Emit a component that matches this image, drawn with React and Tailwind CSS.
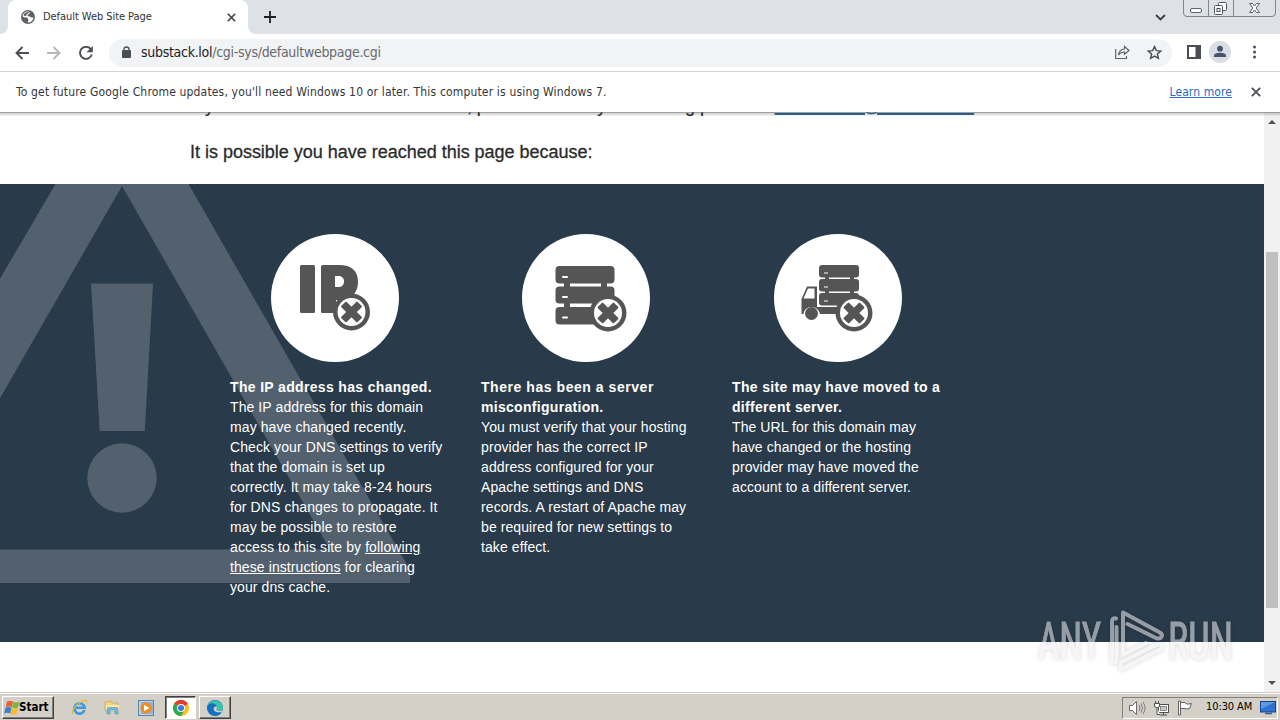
import React from "react";

const ui = "font-['DejaVu_Sans_Condensed','DejaVu_Sans',sans-serif] [font-stretch:condensed]";

function ErrorBadge({ cx, cy, scale = 1 }) {
  return (
    <g transform={`translate(${cx} ${cy}) scale(${scale})`}>
      <circle r="18.5" fill="#555" />
      <circle r="14" fill="#fff" />
      <g transform="rotate(45)" fill="#555">
        <rect x="-11.5" y="-3.8" width="23" height="7.6" rx="1" />
        <rect x="-3.8" y="-11.5" width="7.6" height="23" rx="1" />
      </g>
    </g>
  );
}

function IpIcon() {
  return (
    <svg className="block size-32" viewBox="0 0 128 128">
      <circle cx="64" cy="64" r="64" fill="#fff" />
      <rect x="29" y="31" width="15" height="48" rx="1.5" fill="#555" />
      <path fill="#555" fillRule="evenodd" d="M50 32.5Q50 31 51.5 31H68C81 31 87 37 87 48C87 59 80 66 68 66H65V79H51.5Q50 79 50 77.500ZM64 42V53H67C71 53 73 51 73 47.500C73 44 71 42 67 42Z" />
      <ErrorBadge cx="80.500" cy="78" />
    </svg>
  );
}

function ServerIcon() {
  return (
    <svg className="block size-32" viewBox="0 0 128 128">
      <circle cx="64" cy="64" r="64" fill="#fff" />
      <g fill="#555">
        <rect x="33.500" y="32" width="59" height="17.500" rx="4" />
        <rect x="33.500" y="52.500" width="59" height="17" rx="4" />
        <rect x="33.500" y="73" width="59" height="17.500" rx="4" />
        <rect x="42" y="48" width="6" height="28" />
        <rect x="79" y="48" width="6" height="28" />
      </g>
      <g fill="#fff">
        <rect x="40" y="42" width="6" height="2" rx="1" />
        <rect x="40" y="62" width="6" height="2" rx="1" />
        <rect x="40" y="82.500" width="6" height="2" rx="1" />
      </g>
      <ErrorBadge cx="86" cy="79" />
    </svg>
  );
}

function TruckIcon() {
  return (
    <svg className="block size-32" viewBox="0 0 128 128">
      <circle cx="64" cy="64" r="64" fill="#fff" />
      <g fill="#555">
        <rect x="45" y="31" width="40" height="12.500" rx="3" />
        <rect x="45" y="45" width="40" height="12.500" rx="3" />
        <rect x="45" y="59" width="40" height="12.500" rx="3" />
        <rect x="51" y="42" width="4" height="19" />
        <rect x="76" y="42" width="4" height="19" />
        <path fillRule="evenodd" d="M33 52.500H43V73H70V80H46C45 76 42 73 37.500 73C33 73 30 76 29.500 80H27.500V65ZM34 54.500L29.500 64.500H40.500V54.500Z" />
        <circle cx="37.500" cy="79.500" r="6.500" />
      </g>
      <path stroke="#fff" strokeWidth="1.200" d="M50 39H54M50 53H54M50 67H54" />
      <ErrorBadge cx="80" cy="79" />
    </svg>
  );
}

function Column({ icon, title, lines, titleClass, iconClass }) {
  return (
    <div className="w-[251px] px-5">
      <div className={`mb-[15px] size-32 ${iconClass}`}>{icon}</div>
      <div className="whitespace-nowrap text-[14px] leading-5 tracking-[0.09px] text-white">
        {title.map((t, i) => (
          <h2 key={t} className={`font-bold ${i === 0 ? titleClass : "tracking-[0.3px]"}`}>{t}</h2>
        ))}
        {lines.map((l, i) => (
          <p key={i}>{l}</p>
        ))}
      </div>
    </div>
  );
}

function Globe() {
  return (
    <svg className="size-[14px]" viewBox="0 0 14 14">
      <circle cx="7" cy="7" r="7" fill="#5f6368" />
      <path fill="#fff" d="M5 1.700C3 2.300 1.600 4.400 1.500 6.600L4 7.500L6 7.400L7.500 9.200L6.800 12.500C10 12.400 12.400 10.200 12.500 7.400L10.500 7.600L8.600 6.600L7 6.200L6.300 4.900L8 4.100L9 2.200C8 1.400 6.300 1.300 5 1.700Z" />
      <path fill="#5f6368" d="M5.500 2.200L8.200 2L7.300 3.600L5.600 4.300L5 6.200L2.500 5.600L3.300 3.600Z" />
    </svg>
  );
}

function TabStrip() {
  return (
    <div className="flex h-[34px] bg-[#dee1e6]">
      <div className="w-2 bg-white">
        <div className="h-full rounded-br-lg bg-[#dee1e6]" />
      </div>
      <div className="flex w-60 items-center rounded-t-lg bg-white pl-[13px]">
        <Globe />
        <span className="ml-2 w-[184px] whitespace-nowrap text-[11px] tracking-[-0.06px] text-[#303134]">Default Web Site Page</span>
        <svg className="size-[9px]" viewBox="0 0 9 9">
          <path d="M.8.800L8.200 8.200M8.200.800L.8 8.200" stroke="#3c4043" strokeWidth="1.600" />
        </svg>
      </div>
      <div className="w-2 bg-white">
        <div className="h-full rounded-bl-lg bg-[#dee1e6]" />
      </div>
      <svg className="mt-[11px] ml-2 size-3" viewBox="0 0 12 12">
        <path d="M6 0V12M0 6H12" stroke="#202124" strokeWidth="1.800" />
      </svg>
      <div className="flex-1" />
      <svg className="mt-[14px] h-[7px] w-[11px]" viewBox="0 0 11 7">
        <path d="M1 1L5.500 5.500L10 1" fill="none" stroke="#3c4043" strokeWidth="1.800" />
      </svg>
      <svg className="ml-[17px] h-[18px] w-[97px]" viewBox="0 0 97 18">
        <path d="M.5 0V13Q.5 16.500 4 16.500H89Q92.500 16.500 92.500 13V0M25.500 0V16M50.500 0V16" fill="none" stroke="#7f8794" />
        <rect x="7.500" y="8.500" width="11" height="4" rx="1.500" fill="#fff" stroke="#5d6470" />
        <g fill="#fff" stroke="#4f5661">
          <rect x="35.500" y="2.500" width="8" height="8" rx="1" />
          <rect x="31.500" y="5.500" width="8" height="9" rx="1" />
          <rect x="34" y="8.500" width="3" height="3" />
        </g>
        <path d="M66.500 3.500H69.500L71.500 6L73.500 3.500H76.500L73.200 8L76.500 12.500H73.500L71.500 10L69.500 12.500H66.500L69.800 8Z" fill="#fff" stroke="#5d6470" />
      </svg>
    </div>
  );
}

function Toolbar() {
  return (
    <div className="flex h-[38px] items-center border-b border-[#d5d7da] bg-white pl-[15px]">
      <svg className="size-[14px]" viewBox="0 0 14 14">
        <path d="M14 7H1.500M7.500 1L1.500 7L7.500 13" fill="none" stroke="#4b4f54" strokeWidth="1.900" />
      </svg>
      <svg className="ml-[18px] size-[14px]" viewBox="0 0 14 14">
        <path d="M0 7H12.500M6.500 1L12.500 7L6.500 13" fill="none" stroke="#b6b8bb" strokeWidth="1.900" />
      </svg>
      <svg className="ml-[18px] size-[14px]" viewBox="0 0 14 14">
        <path d="M11.800 3.200A6 6 0 1 0 12.800 8.500" fill="none" stroke="#4b4f54" strokeWidth="1.900" />
        <path d="M13.800 0V6.200H7.600Z" fill="#4b4f54" />
      </svg>
      <div className="ml-4 flex h-7 w-[1063px] items-center rounded-full bg-[#f1f3f4] pl-[13px]">
        <svg className="-mt-0.5 h-3 w-[9px]" viewBox="0 0 9 12">
          <rect y="4" width="9" height="8" rx="1" fill="#4b4f54" />
          <path d="M2 5V3.500A2.500 2.500 0 0 1 7 3.500V5" fill="none" stroke="#4b4f54" strokeWidth="1.300" />
        </svg>
        <span className="ml-[10px] whitespace-nowrap text-[14px] tracking-[-0.29px] text-[#66696d]">
          <span className="text-[#202124]">substack.lol</span>/cgi-sys/defaultwebpage.cgi
        </span>
        <div className="flex-1" />
        <svg className="size-[15px]" viewBox="0 0 15 15" fill="none" stroke="#5f6368" strokeWidth="1.200">
          <path d="M.7 4V13.500H11.500V11" />
          <path d="M9.500 1.500L14 5.500L9.500 9.300V7C6.500 7 5 8 3.500 10C4 6.500 6 4.200 9.500 4Z" />
        </svg>
        <svg className="ml-[17px] mr-[10px] size-[15px]" viewBox="0 0 24 24">
          <path d="M12 2.500L14.900 9L22 9.700L16.600 14.400L18.200 21.400L12 17.700L5.800 21.400L7.400 14.400L2 9.700L9.100 9Z" fill="none" stroke="#4b4f54" strokeWidth="2.300" />
        </svg>
      </div>
      <svg className="-mt-0.5 ml-[15px] h-[14px] w-[14px]" viewBox="0 0 14 14">
        <path fill="#4b4f54" fillRule="evenodd" d="M0 0H14V14H0ZM2 2V12H8.500V2Z" />
      </svg>
      <svg className="-mt-0.5 ml-2 size-[22px]" viewBox="0 0 22 22">
        <circle cx="11" cy="11" r="11" fill="#dadde4" />
        <circle cx="11" cy="7.700" r="2.900" fill="#47526b" />
        <path d="M5 16V14.500C5 12.500 8.500 11.700 11 11.700S17 12.500 17 14.500V16Z" fill="#47526b" />
      </svg>
      <svg className="-mt-0.5 ml-5 h-[14px] w-[6px]" viewBox="0 0 6 14" fill="#4b4f54">
        <circle cx="3.500" cy="2" r="1.500" />
        <circle cx="3.500" cy="7" r="1.500" />
        <circle cx="3.500" cy="12" r="1.500" />
      </svg>
    </div>
  );
}

function InfoBar() {
  return (
    <div className="relative z-10 flex h-10 items-center bg-white pl-4 text-[12px] whitespace-nowrap text-[#333639] shadow-[0_1px_0_rgba(120,120,120,0.55),0_2px_2px_1px_rgba(0,0,0,0.18)]">
      <span className="tracking-[0.165px]">To get future Google Chrome updates, you'll need Windows 10 or later. This computer is using Windows 7.</span>
      <span className="ml-auto tracking-[0.1px] text-[#2a6ac8] underline">Learn more</span>
      <svg className="mr-[19px] ml-[19px] size-[10px]" viewBox="0 0 10 10">
        <path d="M.8.800L9.200 9.200M9.200.800L.8 9.200" stroke="#4b4f54" strokeWidth="1.800" />
      </svg>
    </div>
  );
}

function Page() {
  return (
    <div className="flex h-[580px] overflow-hidden">
      <main className="w-[1264px] bg-white font-['Liberation_Sans',Arial,sans-serif]">
        <div className="-mt-[18px] ml-[190px] text-[18px] leading-6 whitespace-nowrap text-[#2b2b2b]">
          <p className="tracking-[-0.035px] [-webkit-text-stroke:0.2px]">
            If you are the owner of this website, please contact your hosting provider:{" "}
            <a className="text-[#2f6fa5] underline decoration-2">webmaster@substack.lol</a>
          </p>
          <p className="mt-[22px] mb-5 tracking-[-0.015px] [-webkit-text-stroke:0.3px_#2b2b2b]">It is possible you have reached this page because:</p>
        </div>
        <section className="relative h-[458px] bg-[#293a4a]">
          <svg className="absolute top-0 left-0 h-[458px] w-[420px]" viewBox="0 184 420 458" fill="#53616e">
            <path fillRule="evenodd" d="M-60 381L55.500 184H188.500L410 570V583H-60ZM122 186L-87 549.500H330Z" />
            <path d="M91 283.500H153L144.800 431H99.700Z" />
            <circle cx="122" cy="478" r="34.700" />
          </svg>
          <div className="relative flex pt-[50px] pl-[210px]">
            <Column
              icon={<IpIcon />}
              iconClass="ml-[41px]"
              titleClass="tracking-[0.34px]"
              title={["The IP address has changed."]}
              lines={[
                "The IP address for this domain",
                "may have changed recently.",
                "Check your DNS settings to verify",
                "that the domain is set up",
                "correctly. It may take 8-24 hours",
                "for DNS changes to propagate. It",
                "may be possible to restore",
                <>access to this site by <a className="underline">following</a></>,
                <><a className="underline">these instructions</a> for clearing</>,
                "your dns cache.",
              ]}
            />
            <Column
              icon={<ServerIcon />}
              iconClass="ml-[41px]"
              titleClass="tracking-[0.55px]"
              title={["There has been a server", "misconfiguration."]}
              lines={[
                "You must verify that your hosting",
                "provider has the correct IP",
                "address configured for your",
                "Apache settings and DNS",
                "records. A restart of Apache may",
                "be required for new settings to",
                "take effect.",
              ]}
            />
            <Column
              icon={<TruckIcon />}
              iconClass="ml-[42px]"
              titleClass="tracking-[0.35px]"
              title={["The site may have moved to a", "different server."]}
              lines={[
                "The URL for this domain may",
                "have changed or the hosting",
                "provider may have moved the",
                "account to a different server.",
              ]}
            />
          </div>
        </section>
      </main>
      <div className="flex w-4 flex-col items-center bg-[#f1f1f1] pt-[8px]">
        <svg className="h-[4px] w-2" viewBox="0 0 8 4"><path d="M0 4L4 0L8 4Z" fill="#505050" /></svg>
        <div className="mt-[128px] h-[356px] w-3 bg-[#c1c1c1]" />
        <svg className="mt-[73px] h-[4px] w-2" viewBox="0 0 8 4"><path d="M0 0L4 4L8 0Z" fill="#505050" /></svg>
      </div>
    </div>
  );
}

function Watermark() {
  return (
    <svg className="absolute top-[600px] left-[1030px] z-20 h-[80px] w-[210px] opacity-55 [filter:drop-shadow(0_0_2px_rgba(0,0,0,0.3))]" viewBox="1030 600 210 80">
      <g fill="#eef0f2" stroke="#eef0f2" strokeWidth="1" fontFamily="Roboto, sans-serif" fontSize="52">
        <text x="1038" y="659" textLength="63" lengthAdjust="spacingAndGlyphs">ANY</text>
        <text x="1168" y="659" textLength="65" lengthAdjust="spacingAndGlyphs">RUN</text>
      </g>
      <g fill="none" stroke="#eef0f2" strokeWidth="4" strokeLinejoin="round" strokeLinecap="round">
        <path d="M1116 618.500Q1112 617.500 1112 622V662H1116.500V627" />
        <path d="M1127.500 624L1157 638.500Q1161 639 1162 635.500Q1162 633.500 1159 632L1123 612.500V655L1146 643" />
        <path d="M1121 662V669.500L1162 648.500V644.500H1157L1121 662" />
      </g>
    </svg>
  );
}

function StartFlag() {
  return (
    <svg className="h-4 w-4" viewBox="0 0 16 16">
      <path d="M3 1.500Q6 0 9 1.500L7.700 7.200Q5 5.900 1.700 7.200Z" fill="#e8603c" />
      <path d="M9.300 1.800Q12 3.300 15.500 1.800L14 7.500Q11 9 8 7.500Z" fill="#7db53b" />
      <path d="M1.500 7.700Q4.500 6.500 7.500 7.700L6.200 13.500Q3.500 12.200 0 13.500Z" fill="#3d7ed0" />
      <path d="M7.800 8Q10.500 9.500 13.800 8L12.500 14Q9.500 15.500 6.400 14Z" fill="#f2bd28" />
    </svg>
  );
}

function Taskbar() {
  return (
    <div className="flex h-[27px] items-center border-t border-white bg-[#d4d0c8] pt-px">
      <div className="ml-[2px] flex h-[23px] w-[52px] items-center border border-t-white border-r-[#404040] border-b-[#404040] border-l-white pl-px shadow-[inset_-1px_-1px_0_#808080]">
        <StartFlag />
        <span className="-ml-px text-[11.500px] font-bold tracking-[0px] text-black">Start</span>
      </div>
      <svg className="ml-[17px] size-[17px]" viewBox="0 0 17 17">
        <path d="M13.500 11A5.200 5.200 0 1 1 13.700 8.800H4" fill="none" stroke="#3a9be0" strokeWidth="2.600" />
        <path d="M2 14.500C-.5 14 3 7 9 3.500C13 1 16.500.5 15.500 3.500" fill="none" stroke="#e5b93e" strokeWidth="1.300" />
      </svg>
      <svg className="ml-4 size-[17px]" viewBox="0 0 17 17">
        <path d="M1 3L7 2L8 4H14V12H1Z" fill="#f0d77f" stroke="#c6a548" strokeWidth=".7" />
        <path d="M2 6H15V12H2Z" fill="#fae9a6" />
        <path d="M3 15V10Q3 8.500 5 8.500H12Q14 8.500 14 10V15H11V11H6V15Z" fill="#71b8df" stroke="#4f94bd" strokeWidth=".6" />
      </svg>
      <svg className="ml-[17px] size-4" viewBox="0 0 16 16">
        <rect x=".5" y=".5" width="15" height="15" fill="#b9d5ee" stroke="#5685b4" />
        <rect x="3" y="2" width="12" height="12" fill="#8eb5dc" />
        <circle cx="8" cy="8" r="5.700" fill="#f38a1d" />
        <path d="M6 4.700L11.500 8L6 11.300Z" fill="#fff" />
      </svg>
      <div className="ml-[11px] flex h-[23px] w-[31px] items-center justify-center border border-t-[#404040] border-r-white border-b-white border-l-[#404040] bg-white shadow-[inset_1px_1px_0_#808080]">
        <svg className="size-4" viewBox="0 0 16 16">
          <circle cx="8" cy="8" r="8" fill="#fbc116" />
          <path d="M8 8L1.070 4A8 8 0 0 1 14.930 4Z" fill="#e33b2e" />
          <path d="M8 8L1.070 4A8 8 0 0 0 8 16L11.500 10Z" fill="#2da94f" />
          <circle cx="8" cy="8" r="4" fill="#fff" />
          <circle cx="8" cy="8" r="3" fill="#3878e0" />
        </svg>
      </div>
      <div className="ml-[3px] flex h-[23px] w-[32px] items-center justify-center border border-t-white border-r-[#404040] border-b-[#404040] border-l-white shadow-[inset_-1px_-1px_0_#808080]">
        <svg className="size-4" viewBox="0 0 16 16">
          <circle cx="8" cy="8" r="8" fill="#1479cc" />
          <path d="M.3 6.500C1.500-1 14.500-2 16 7.500C16 11 11.500 11.500 9.800 10.300C11 8.500 9.500 5.500 6 5.300C3 5.200 1 6 .3 6.500Z" fill="#3cc4a8" />
          <path d="M.2 6.500C2 2 8.500 2 10 6.500C6 4.500 4.500 10 8 12.500C10 14 12.500 13.500 14 13C10 18 0 16 .2 6.500Z" fill="#1670c2" />
          <path d="M6.800 8C6 10.500 8.500 13 14.500 12.200L16 10C13 11.500 9.500 11 9.500 9.500Q10.500 8 9.500 6.500Q7.500 6 6.800 8Z" fill="#d4d0c8" />
        </svg>
      </div>
      <div className="mr-[2px] ml-auto flex h-[22px] w-[156px] items-center border border-t-[#808080] border-r-white border-b-white border-l-[#808080] pl-[6px]">
        <svg className="h-4 w-[17px]" viewBox="0 0 17 16" fill="#fff" stroke="#6b6b6b">
          <path d="M.5 5.500H3.500L7.500 1.500V14.500L3.500 10.500H.5Z" />
          <path d="M10 5Q12 8 10 11M12 3.500Q15 8 12 12.500M14 2Q18 8 14 14" fill="none" strokeWidth=".8" />
        </svg>
        <svg className="ml-[7px] size-4" viewBox="0 0 16 16" fill="#fff" stroke="#505050">
          <rect x="5.500" y="4.500" width="10" height="8" />
          <rect x="7.500" y="6.500" width="6" height="4" fill="#c8c8c8" strokeWidth=".6" />
          <path d="M7 15H14M10.500 12.500V15" />
          <path d="M1.500 3.500H6.500V6Q6.500 7.500 4.500 7.500H3.500Q1.500 7.500 1.500 6ZM2.500 1V3.500M5.500 1V3.500M4 7.500V14.500H7" />
        </svg>
        <svg className="ml-2 size-4" viewBox="0 0 16 16" fill="#fff" stroke="#606060">
          <path d="M3.500 2.500H8Q9 5 14.500 3.500L12.500 8.500Q9.500 9.500 8 8.500H3.500Z" />
          <path d="M1.500 1H3.500V15H1.500Z" />
        </svg>
        <span className="ml-[13px] w-[49px] text-[11px] tracking-[-0.1px] whitespace-nowrap text-black">10:30 AM</span>
        <svg className="ml-[5px] h-[14px] w-4" viewBox="0 0 16 14">
          <rect x=".5" y=".5" width="15" height="10.500" fill="#2f73cf" stroke="#17468e" />
          <path d="M1 1H15L1 8Z" fill="#5d9ae6" />
          <path d="M5 12.500H12" stroke="#385d92" strokeWidth="1.500" />
        </svg>
      </div>
    </div>
  );
}

export default function App() {
  return (
    <div className={`relative flex h-[720px] w-[1280px] flex-col overflow-hidden bg-white ${ui}`}>
      <TabStrip />
      <Toolbar />
      <InfoBar />
      <Page />
      <div className="h-px bg-[#d4d0c8]" />
      <Taskbar />
      <Watermark />
    </div>
  );
}
